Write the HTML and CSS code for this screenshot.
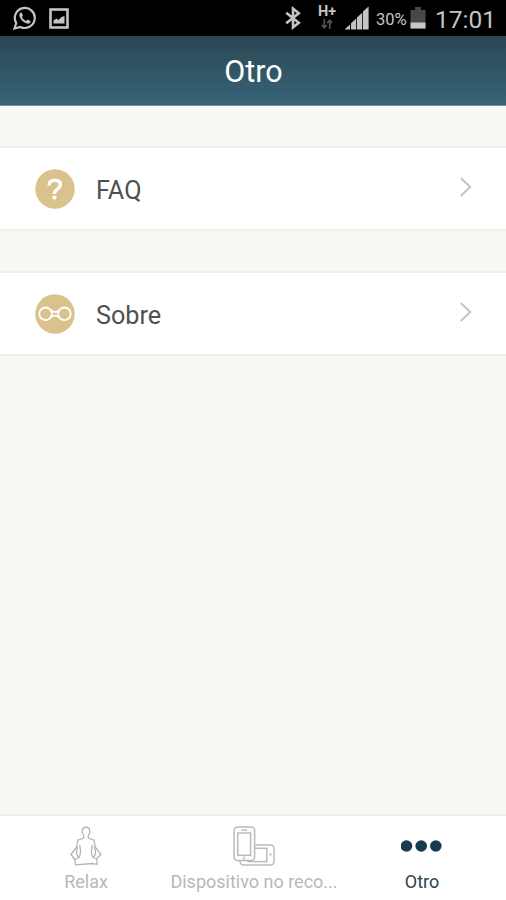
FILE: index.html
```html
<!DOCTYPE html>
<html lang="es">
<head>
    <meta charset="UTF-8">
    <meta name="viewport" content="width=device-width, initial-scale=1.0">
    <title>Otro</title>
    <link rel="stylesheet" href="styles.css">
</head>
<body>
<div class="statusbar">
    <svg class="whatsapp" width="24" height="24" viewBox="0 0 24 24">
        <path d="M1.5 22.5 3.2 17A10 10 0 1 1 7.4 20.9Z" fill="none" stroke="#c4c4c4" stroke-width="2.2"/>
        <path d="M8.4 6.3 10 9.6 8.9 11.1C9.8 13 11.2 14.3 13.2 15L14.7 13.6 17.7 15.2C17.4 17.2 16 18 14.2 17.6 10 16.5 7 13.2 6.4 9.6 6.2 8 7 6.6 8.4 6.3Z" fill="#c4c4c4"/>
    </svg>
    <svg class="picture" width="20" height="21" viewBox="0 0 20 21">
        <rect x="1.5" y="1.5" width="17" height="18" fill="none" stroke="#c4c4c4" stroke-width="2.6"/>
        <path d="M4.5 15.5V12.5L7.5 10.5 9.5 12 12.5 9 15.5 8V15.5Z" fill="#c4c4c4"/>
    </svg>
    <svg class="bluetooth" width="16" height="24" viewBox="0 0 16 24">
        <path d="M1.2 6.8 13.8 16.8 8 21.4V2.6L13.8 7.2 1.2 17.2" fill="none" stroke="#c4c4c4" stroke-width="2.6"/>
    </svg>
    <div class="network">
        <span>H+</span>
        <svg width="12" height="10" viewBox="0 0 12 10">
            <path d="M3.3 0V8.5M.8 6 3.3 8.8 5.8 6M8.7 10V1.5M6.2 4 8.7 1.2 11.2 4" fill="none" stroke="#555" stroke-width="1.6"/>
        </svg>
    </div>
    <svg class="signal" width="24" height="24" viewBox="0 0 24 24">
        <path d="M0 23.5V23L5 18.5V23.5ZM6 23.5V17.2L11.2 12.6V23.5ZM12 23.5V11.5L17.2 6.8V23.5ZM18 23.5V5.6L23.6.5V23.5Z" fill="#c4c4c4"/>
    </svg>
    <span class="percent">30%</span>
    <svg class="battery" width="16" height="23" viewBox="0 0 16 23">
        <path d="M5 0H11V3H15.5V21.5H.5V3H5Z" fill="#484848"/>
        <path d="M.5 15.5H15.5V21.5H.5Z" fill="#c8c8c8"/>
    </svg>
    <span class="clock">17:01</span>
</div>
<div class="header">
    <h1>Otro</h1>
</div>
<div class="content">
    <div class="row">
        <svg class="icon" width="40" height="40" viewBox="0 0 40 40">
            <circle cx="20" cy="20" r="19.7" fill="#d9c28c"/>
            <path d="M14.1 16.4C14.1 12.9 16.3 11.3 19.8 11.3 23.2 11.3 25.4 13 25.4 15.8 25.4 19.9 19.4 20.2 19.4 25" fill="none" stroke="#fff" stroke-width="3.4"/>
            <circle cx="19.4" cy="28.6" r="2.1" fill="#fff"/>
        </svg>
        <span class="label">FAQ</span>
        <svg class="arrow" width="14" height="22" viewBox="0 0 14 22">
            <path d="M1.8 2 11.2 11 1.8 20" fill="none" stroke="#c4c4c4" stroke-width="2"/>
        </svg>
    </div>
    <div class="row">
        <svg class="icon" width="40" height="40" viewBox="0 0 40 40">
            <circle cx="20" cy="20" r="19.7" fill="#d9c28c"/>
            <g fill="none" stroke="#fff" stroke-width="1.8">
                <circle cx="10.6" cy="19.8" r="6.3"/>
                <circle cx="29.4" cy="19.8" r="6.3"/>
                <path d="M15.3 16C17 17.6 18 18 20 18 22 18 23 17.6 24.7 16M15.3 23.6C17 22 18 21.6 20 21.6 22 21.6 23 22 24.7 23.6"/>
            </g>
        </svg>
        <span class="label">Sobre</span>
        <svg class="arrow" width="14" height="22" viewBox="0 0 14 22">
            <path d="M1.8 2 11.2 11 1.8 20" fill="none" stroke="#c4c4c4" stroke-width="2"/>
        </svg>
    </div>
</div>
<div class="tabbar">
    <div class="tab">
        <svg width="42" height="42" viewBox="0 0 42 42">
            <g fill="none" stroke="#b5b5b5" stroke-width="1.3" stroke-linejoin="round">
                <path d="M18.8 11C17.4 9 16.8 7 17.3 5 18.2 1.3 23.8 1.3 24.7 5 25.2 7 24.4 9 23.2 11V13L29 15.2 30.2 22 36 29.5 31.8 33.5 32.2 39.3 27 38.5 10.5 39.8 9.8 34.5 6 29.5 11.6 22 12.8 15.2 18.8 13Z"/>
                <path d="M14.6 20C16 25 16 29 14 32.5M12.8 22C11 26 10.5 30 14 32.5L10 34.5M27.4 20C26 25 26 29 28 32.5M29.2 22C31 26 31.5 30 28 32.5L31.8 34"/>
            </g>
        </svg>
        <span>Relax</span>
    </div>
    <div class="tab">
        <svg width="42" height="42" viewBox="0 0 42 42">
            <g fill="#fff" stroke="#bababa" stroke-width="1.5">
                <rect x="7" y="20" width="34" height="20" rx="3.5"/>
                <rect x="15" y="23.3" width="18.8" height="13.3"/>
                <path d="M36.3 29.5H38.7"/>
                <rect x="1" y="2" width="20.6" height="33.5" rx="3.5"/>
                <rect x="4.8" y="8" width="12.8" height="22.3"/>
                <path d="M8.5 5H14M11.2 31.5V34.5"/>
            </g>
        </svg>
        <span>Dispositivo no reco...</span>
    </div>
    <div class="tab active">
        <svg width="42" height="42" viewBox="0 0 42 42">
            <g fill="#183c4e">
                <circle cx="5.5" cy="21" r="5.8"/>
                <circle cx="20.2" cy="21" r="5.8"/>
                <circle cx="34.8" cy="21" r="5.8"/>
            </g>
        </svg>
        <span>Otro</span>
    </div>
</div>
</body>
</html>
```
FILE: styles.css
```css
* {
  box-sizing: border-box;
}
body {
  margin: 0;
  height: 900px;
  display: flex;
  flex-direction: column;
  overflow: hidden;
  font-family: Roboto, "Liberation Sans", sans-serif;
  background-color: #f9f8f4;
}
svg {
  display: block;
  flex: none;
}
.statusbar {
  height: 36px;
  display: flex;
  align-items: center;
  padding: 0 12px 0 13px;
  background-color: #000;
  color: #c4c4c4;
}
.picture {
  margin-left: 12px;
}
.bluetooth {
  margin-left: auto;
}
.network {
  width: 20px;
  margin-left: 16px;
  margin-top: -2px;
  display: flex;
  flex-direction: column;
  align-items: center;
  font-size: 14.5px;
  font-weight: 700;
  line-height: 14px;
}
.signal {
  margin-left: 8px;
}
.percent {
  width: 31px;
  margin-left: 7px;
  font-size: 16.5px;
  padding-top: 2px;
}
.battery {
  margin-left: 3px;
}
.clock {
  width: 59px;
  margin-left: 9px;
  font-size: 24.5px;
  padding-top: 2px;
  white-space: nowrap;
}
.header {
  height: 70px;
  display: flex;
  align-items: center;
  justify-content: center;
  background: linear-gradient(#2b4754, #376478);
  border-bottom: 1px solid #7b949e;
}
h1 {
  margin: 1px 0 0 1px;
  font-size: 30.5px;
  font-weight: 400;
  color: #fff;
}
.content {
  flex: 1;
  padding-top: 40px;
}
.row {
  height: 85px;
  margin-bottom: 40px;
  padding: 0 33px 0 35px;
  display: flex;
  align-items: center;
  background-color: #fff;
  border-top: 2px solid #f0efed;
  border-bottom: 2px solid #f0efed;
}
.label {
  flex: 1;
  margin-left: 21px;
  padding-top: 3px;
  font-size: 25.2px;
  color: #505050;
}
.arrow {
  margin-bottom: 3px;
}
.tabbar {
  height: 86px;
  padding: 9px 0 0 2px;
  display: grid;
  grid-template-columns: repeat(3, 1fr);
  background-color: #fff;
  border-top: 2px solid #efeeec;
}
.tab {
  display: flex;
  flex-direction: column;
  align-items: center;
  font-size: 18px;
  color: #b8b8b8;
  white-space: nowrap;
}
.tab span {
  margin-top: 4px;
  line-height: 22px;
}
.active {
  color: #2c4450;
}
```
